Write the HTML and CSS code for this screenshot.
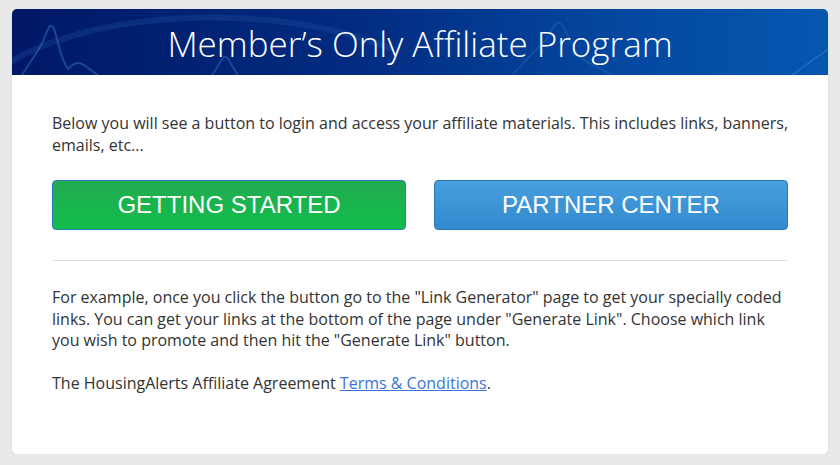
FILE: index.html
```html
<!DOCTYPE html>
<html>
<head>
<meta charset="utf-8">
<link rel="stylesheet" href="styles.css">
</head>
<body>
<div class="card">
  <div class="header">
    <svg class="waves" viewBox="0 0 816 66" preserveAspectRatio="none" aria-hidden="true">
      <path d="M10 66 C20 50 28 40 32 30 C36 20 38 12 42 20 C46 30 48 50 56 60 C62 54 66 52 72 56 C78 60 82 64 86 66" fill="none" stroke="#2f6cc0" stroke-opacity="0.55" stroke-width="2"/>
      <path d="M200 66 C205 60 208 52 212 48 C216 46 220 58 226 66" fill="none" stroke="#2f6cc0" stroke-opacity="0.5" stroke-width="2"/>
      <path d="M500 66 C515 50 525 40 535 30 C540 20 545 8 550 16 C556 24 560 40 570 50 C580 56 590 60 600 66" fill="none" stroke="#3a78c8" stroke-opacity="0.35" stroke-width="1.5"/>
      <path d="M780 66 C790 60 800 50 810 45 L816 40" fill="none" stroke="#4a8ad4" stroke-opacity="0.4" stroke-width="1.5"/>
      <path d="M-20 66 C60 0 260 -10 380 40" fill="none" stroke="#2a5fb0" stroke-opacity="0.25" stroke-width="6"/>
    </svg>
    <h1 class="title">Member’s Only Affiliate Program</h1>
  </div>
  <div class="body">
    <p class="text">Below you will see a button to login and access your affiliate materials. This includes links, banners, emails, etc...</p>
    <div class="buttons">
      <a class="btn btn-green" href="#">GETTING STARTED</a>
      <a class="btn btn-blue" href="#">PARTNER CENTER</a>
    </div>
    <hr class="divider">
    <p class="text">For example, once you click the button go to the "Link Generator" page to get your specially coded links. You can get your links at the bottom of the page under "Generate Link". Choose which link you wish to promote and then hit the "Generate Link" button.</p>
    <p class="text">The HousingAlerts Affiliate Agreement <a class="link" href="#">Terms &amp; Conditions</a>.</p>
  </div>
</div>
</body>
</html>
```
FILE: styles.css
```css
html, body {
  margin: 0;
  padding: 0;
}
body {
  background: #e9e9e9;
  font-family: "Open Sans", sans-serif;
  padding: 9px 12px 0;
}
.card {
  background: #fff;
  border-radius: 5px;
  overflow: hidden;
  height: 445px;
  box-shadow: 0 1px 2px rgba(0,0,0,0.08);
}
.header {
  position: relative;
  height: 66px;
  background: linear-gradient(90deg, #001866 0%, #022a7f 40%, #0448a0 75%, #0557b0 100%);
  display: flex;
  align-items: center;
  justify-content: center;
}
.waves {
  position: absolute;
  left: 0;
  top: 0;
  width: 100%;
  height: 100%;
}
.title {
  position: relative;
  margin: 0;
  font-weight: 300;
  font-size: 35px;
  color: #fff;
  letter-spacing: 0;
  line-height: 1;
  padding-top: 2px;
}
.body {
  padding: 38px 40px 0;
}
.text {
  margin: 0 -8px 21px 0;
  font-size: 16px;
  line-height: 21.5px;
  color: #333;
}
.buttons {
  display: flex;
  justify-content: space-between;
  margin-top: 24px;
}
.btn {
  box-sizing: border-box;
  width: 354px;
  height: 50px;
  display: flex;
  align-items: center;
  justify-content: center;
  font-family: "Liberation Sans", Arial, sans-serif;
  font-size: 24px;
  color: #fff;
  text-decoration: none;
  border-radius: 4px;
}
.btn-green {
  background: linear-gradient(180deg, #21ab4f 0%, #12bd4c 100%);
  border: 1px solid #2a7cb8;
}
.btn-blue {
  background: linear-gradient(180deg, #479fdf 0%, #3289cd 100%);
  border: 1px solid #2a78b8;
}
.divider {
  border: 0;
  border-top: 1px solid #ddd;
  margin: 30px 0 26px;
}
.link {
  color: #3b73d9;
  text-decoration: underline;
}
```
